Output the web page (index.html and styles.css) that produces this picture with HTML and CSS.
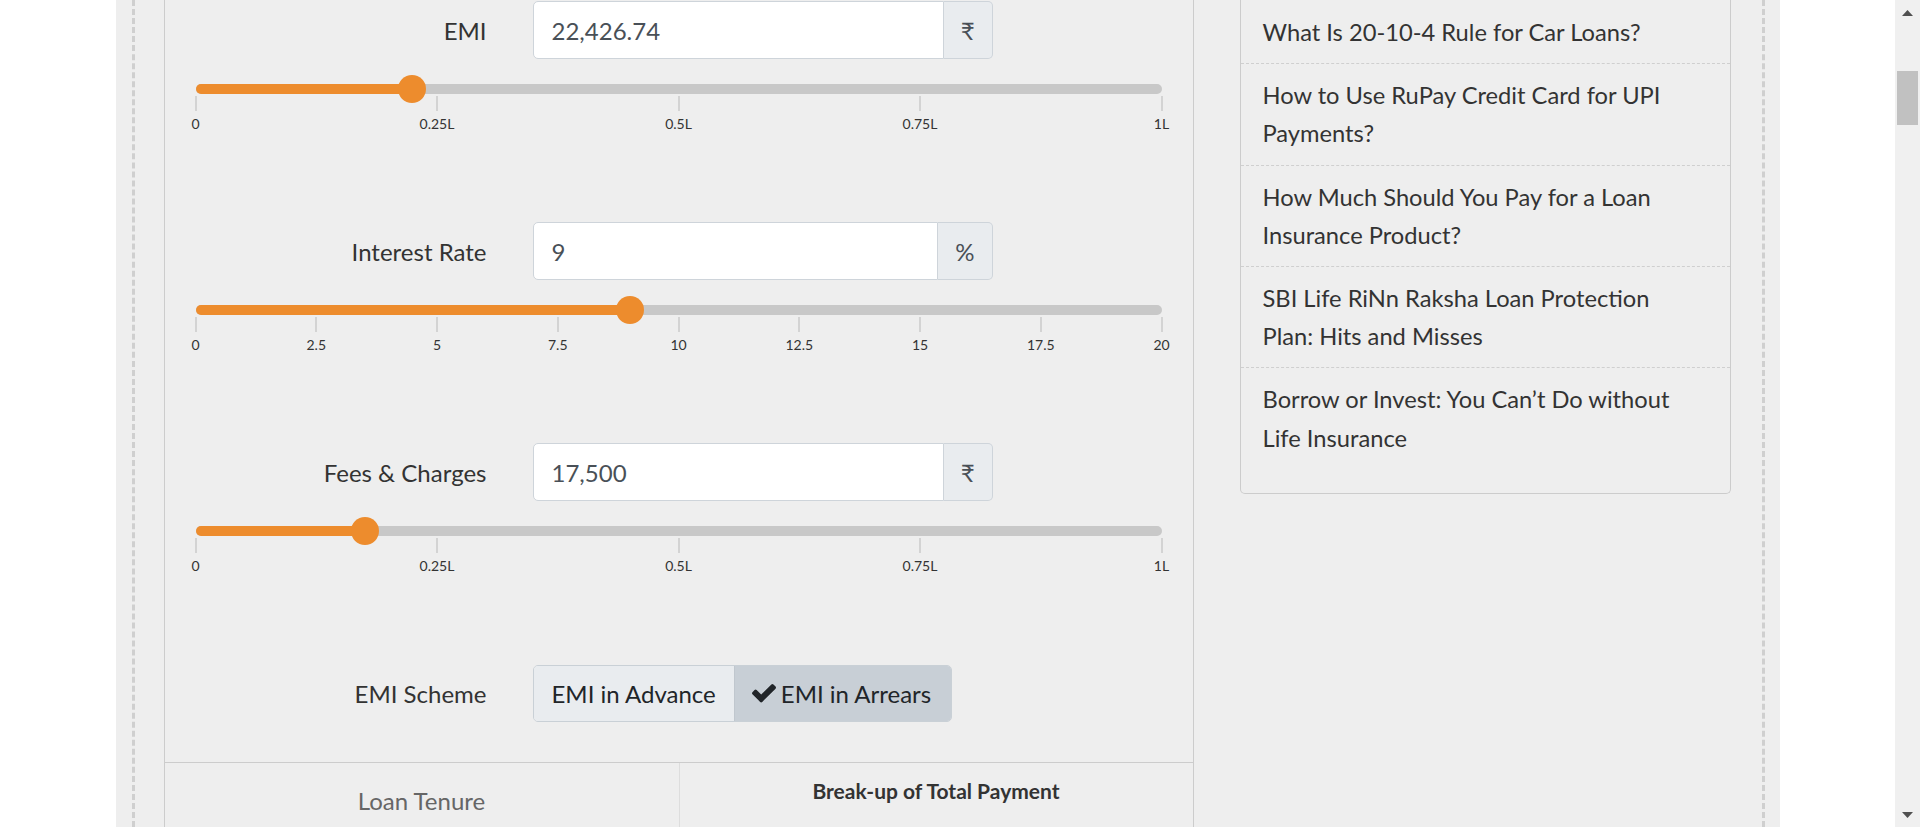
FILE: index.html
```html
<!DOCTYPE html>
<html lang="en">
<head>
<meta charset="utf-8">
<title>EMI Calculator</title>
<link rel="stylesheet" href="styles.css">
</head>
<body>
<div class="page">
  <div class="viewport">
    <div class="container">
      <div class="frame">
        <section class="calc">
          <div class="form">
            <div class="field">
              <div class="field-line">
                <label class="field-label">EMI</label>
                <div class="input-group">
                  <input class="input" type="text" value="22,426.74">
                  <span class="addon">₹</span>
                </div>
              </div>
              <div class="slider">
                <div class="track">
                  <div class="fill" style="width:22.43%"></div>
                  <div class="knob" style="left:22.43%"></div>
                </div>
                <div class="scale">
                  <div class="mark"><i class="tick"></i><span>0</span></div>
                  <div class="mark"><i class="tick"></i><span>0.25L</span></div>
                  <div class="mark"><i class="tick"></i><span>0.5L</span></div>
                  <div class="mark"><i class="tick"></i><span>0.75L</span></div>
                  <div class="mark"><i class="tick"></i><span>1L</span></div>
                </div>
              </div>
            </div>

            <div class="field">
              <div class="field-line">
                <label class="field-label">Interest Rate</label>
                <div class="input-group">
                  <input class="input" type="text" value="9">
                  <span class="addon">%</span>
                </div>
              </div>
              <div class="slider">
                <div class="track">
                  <div class="fill" style="width:45%"></div>
                  <div class="knob" style="left:45%"></div>
                </div>
                <div class="scale">
                  <div class="mark"><i class="tick"></i><span>0</span></div>
                  <div class="mark"><i class="tick"></i><span>2.5</span></div>
                  <div class="mark"><i class="tick"></i><span>5</span></div>
                  <div class="mark"><i class="tick"></i><span>7.5</span></div>
                  <div class="mark"><i class="tick"></i><span>10</span></div>
                  <div class="mark"><i class="tick"></i><span>12.5</span></div>
                  <div class="mark"><i class="tick"></i><span>15</span></div>
                  <div class="mark"><i class="tick"></i><span>17.5</span></div>
                  <div class="mark"><i class="tick"></i><span>20</span></div>
                </div>
              </div>
            </div>

            <div class="field">
              <div class="field-line">
                <label class="field-label">Fees &amp; Charges</label>
                <div class="input-group">
                  <input class="input" type="text" value="17,500">
                  <span class="addon">₹</span>
                </div>
              </div>
              <div class="slider">
                <div class="track">
                  <div class="fill" style="width:17.5%"></div>
                  <div class="knob" style="left:17.5%"></div>
                </div>
                <div class="scale">
                  <div class="mark"><i class="tick"></i><span>0</span></div>
                  <div class="mark"><i class="tick"></i><span>0.25L</span></div>
                  <div class="mark"><i class="tick"></i><span>0.5L</span></div>
                  <div class="mark"><i class="tick"></i><span>0.75L</span></div>
                  <div class="mark"><i class="tick"></i><span>1L</span></div>
                </div>
              </div>
            </div>

            <div class="field-line scheme">
              <label class="field-label">EMI Scheme</label>
              <div class="btn-group">
                <button class="btn" type="button">EMI in Advance</button>
                <button class="btn active" type="button"><svg class="check" viewBox="121 334 1550 1188" aria-hidden="true"><path d="M1671 566q0 40-28 68l-724 724-136 136q-28 28-68 28t-68-28l-136-136-362-362q-28-28-28-68t28-68l136-136q28-28 68-28t68 28l294 295 656-657q28-28 68-28t68 28l136 136q28 28 28 68z"/></svg>EMI in Arrears</button>
              </div>
            </div>
          </div>

          <div class="results">
            <div class="res-col"><h3 class="tenure">Loan Tenure</h3></div>
            <div class="res-col"><h3 class="breakup">Break-up of Total Payment</h3></div>
          </div>
        </section>

        <aside class="sidebar">
          <ul class="links">
            <li>What Is 20-10-4 Rule for Car Loans?</li>
            <li>How to Use RuPay Credit Card for UPI Payments?</li>
            <li>How Much Should You Pay for a Loan Insurance Product?</li>
            <li>SBI Life RiNn Raksha Loan Protection Plan: Hits and Misses</li>
            <li>Borrow or Invest: You Can’t Do without Life Insurance</li>
          </ul>
        </aside>
      </div>
    </div>
  </div>
  <div class="scrollbar">
    <div class="sb-btn"><svg width="11" height="6" viewBox="0 0 11 6"><polygon points="0,6 5.5,0 11,6"/></svg></div>
    <div class="sb-track"><div class="sb-thumb"></div></div>
    <div class="sb-btn"><svg width="11" height="6" viewBox="0 0 11 6"><polygon points="0,0 11,0 5.5,6"/></svg></div>
  </div>
</div>
</body>
</html>
```
FILE: styles.css
```css
html, body {
  margin: 0;
  padding: 0;
}

body {
  font-family: Lato, "Noto Sans", sans-serif;
  color: #333;
}

.page {
  display: flex;
  width: 1920px;
  height: 827px;
  overflow: hidden;
}

.viewport {
  flex: 1;
  display: flex;
  justify-content: center;
  background: #fff;
}

.container {
  width: 1664px;
  flex: none;
  background: #eeeeee;
}

.frame {
  height: 100%;
  margin: 0 15px 0 16px;
  padding: 0 31px 0 29px;
  border-left: 3px dashed #cfcfcf;
  border-right: 3px dashed #cfcfcf;
  display: flex;
  gap: 46px;
  align-items: flex-start;
}

/* calculator panel */
.calc {
  width: 1030px;
  flex: none;
  box-sizing: border-box;
  border: 1px solid #cccccc;
  border-top: 0;
}

.form {
  display: flex;
  flex-direction: column;
  gap: 89px;
  padding: 1px 0 40px;
}

.field-line {
  display: flex;
  align-items: center;
  height: 58px;
}

.field-label {
  width: 322px;
  flex: none;
  padding-right: 46px;
  text-align: right;
  font-size: 24px;
  color: #333;
}

.input-group {
  width: 460px;
  display: flex;
  height: 58px;
}

.input {
  flex: 1;
  min-width: 0;
  height: 58px;
  box-sizing: border-box;
  margin: 0;
  padding: 0 18px;
  border: 1px solid #ced4da;
  border-radius: 5px 0 0 5px;
  background: #fff;
  font-family: Lato, "Noto Sans", sans-serif;
  font-size: 24px;
  color: #495057;
  outline: none;
}

.addon {
  display: flex;
  align-items: center;
  padding: 0 17px;
  background: #e9ecef;
  border: 1px solid #ced4da;
  border-left: 0;
  border-radius: 0 5px 5px 0;
  font-size: 24px;
  color: #495057;
}

.slider {
  margin: 25px 31px 0;
}

.track {
  position: relative;
  height: 10px;
  border-radius: 5px;
  background: #c8c8c8;
}

.fill {
  position: absolute;
  left: 0;
  top: 0;
  bottom: 0;
  background: #ed8c2d;
  border-radius: 5px 0 0 5px;
}

.knob {
  position: absolute;
  top: 50%;
  width: 28px;
  height: 28px;
  border-radius: 50%;
  background: #ed8c2d;
  transform: translate(-50%, -50%);
}

.scale {
  display: flex;
  justify-content: space-between;
  margin-top: 2px;
}

.mark {
  width: 0;
  display: flex;
  flex-direction: column;
  align-items: center;
}

.tick {
  display: block;
  width: 2px;
  height: 15px;
  background: #d3d3d3;
}

.mark span {
  margin-top: 4px;
  font-size: 14px;
  line-height: 18px;
  white-space: nowrap;
  color: #333;
}

.scheme {
  height: 57px;
  margin-top: 1px;
}

.btn-group {
  display: flex;
  height: 57px;
  box-sizing: border-box;
  border: 1px solid #c9d0d6;
  border-radius: 5px;
  overflow: hidden;
}

.btn {
  display: flex;
  align-items: center;
  gap: 5px;
  margin: 0;
  padding: 0 18px;
  border: 0;
  background: #e9ecef;
  font-family: Lato, "Noto Sans", sans-serif;
  font-size: 24px;
  color: #212529;
}

.btn.active {
  background: #c8cfd6;
  border-left: 1px solid #c0c7ce;
  padding: 0 20px 0 17px;
}

.check {
  width: 24px;
  height: 18.4px;
  fill: #212529;
}

.results {
  display: grid;
  grid-template-columns: 1fr 1fr;
  height: 140px;
  border-top: 1px solid #cccccc;
}

.res-col + .res-col {
  border-left: 1px solid #dddddd;
}

.tenure {
  margin: 0;
  padding-top: 19px;
  text-align: center;
  font-size: 24px;
  font-weight: 400;
  line-height: 1.6;
  color: #666;
}

.breakup {
  margin: 0;
  padding-top: 11px;
  text-align: center;
  font-size: 21px;
  font-weight: 700;
  line-height: 1.6;
  color: #333;
}

/* sidebar */
.sidebar {
  width: 491px;
  flex: none;
  box-sizing: border-box;
  border: 1px solid #cccccc;
  border-top: 0;
  border-radius: 0 0 5px 5px;
  padding: 1px 0 24px;
}

.links {
  list-style: none;
  margin: 0;
  padding: 0;
}

.links li {
  padding: 12px 30px 12px 22px;
  border-bottom: 1px dashed #cfcfcf;
  font-size: 23.7px;
  line-height: 38.2px;
  color: #333;
}

.links li:last-child {
  border-bottom: 0;
}

/* scrollbar */
.scrollbar {
  width: 25px;
  flex: none;
  display: flex;
  flex-direction: column;
  background: #f0f0f0;
}

.sb-btn {
  height: 25px;
  display: flex;
  align-items: center;
  justify-content: center;
  fill: #505050;
}

.sb-track {
  flex: 1;
}

.sb-thumb {
  height: 54px;
  margin: 46px 2px 0;
  background: #c1c1c1;
}
```
